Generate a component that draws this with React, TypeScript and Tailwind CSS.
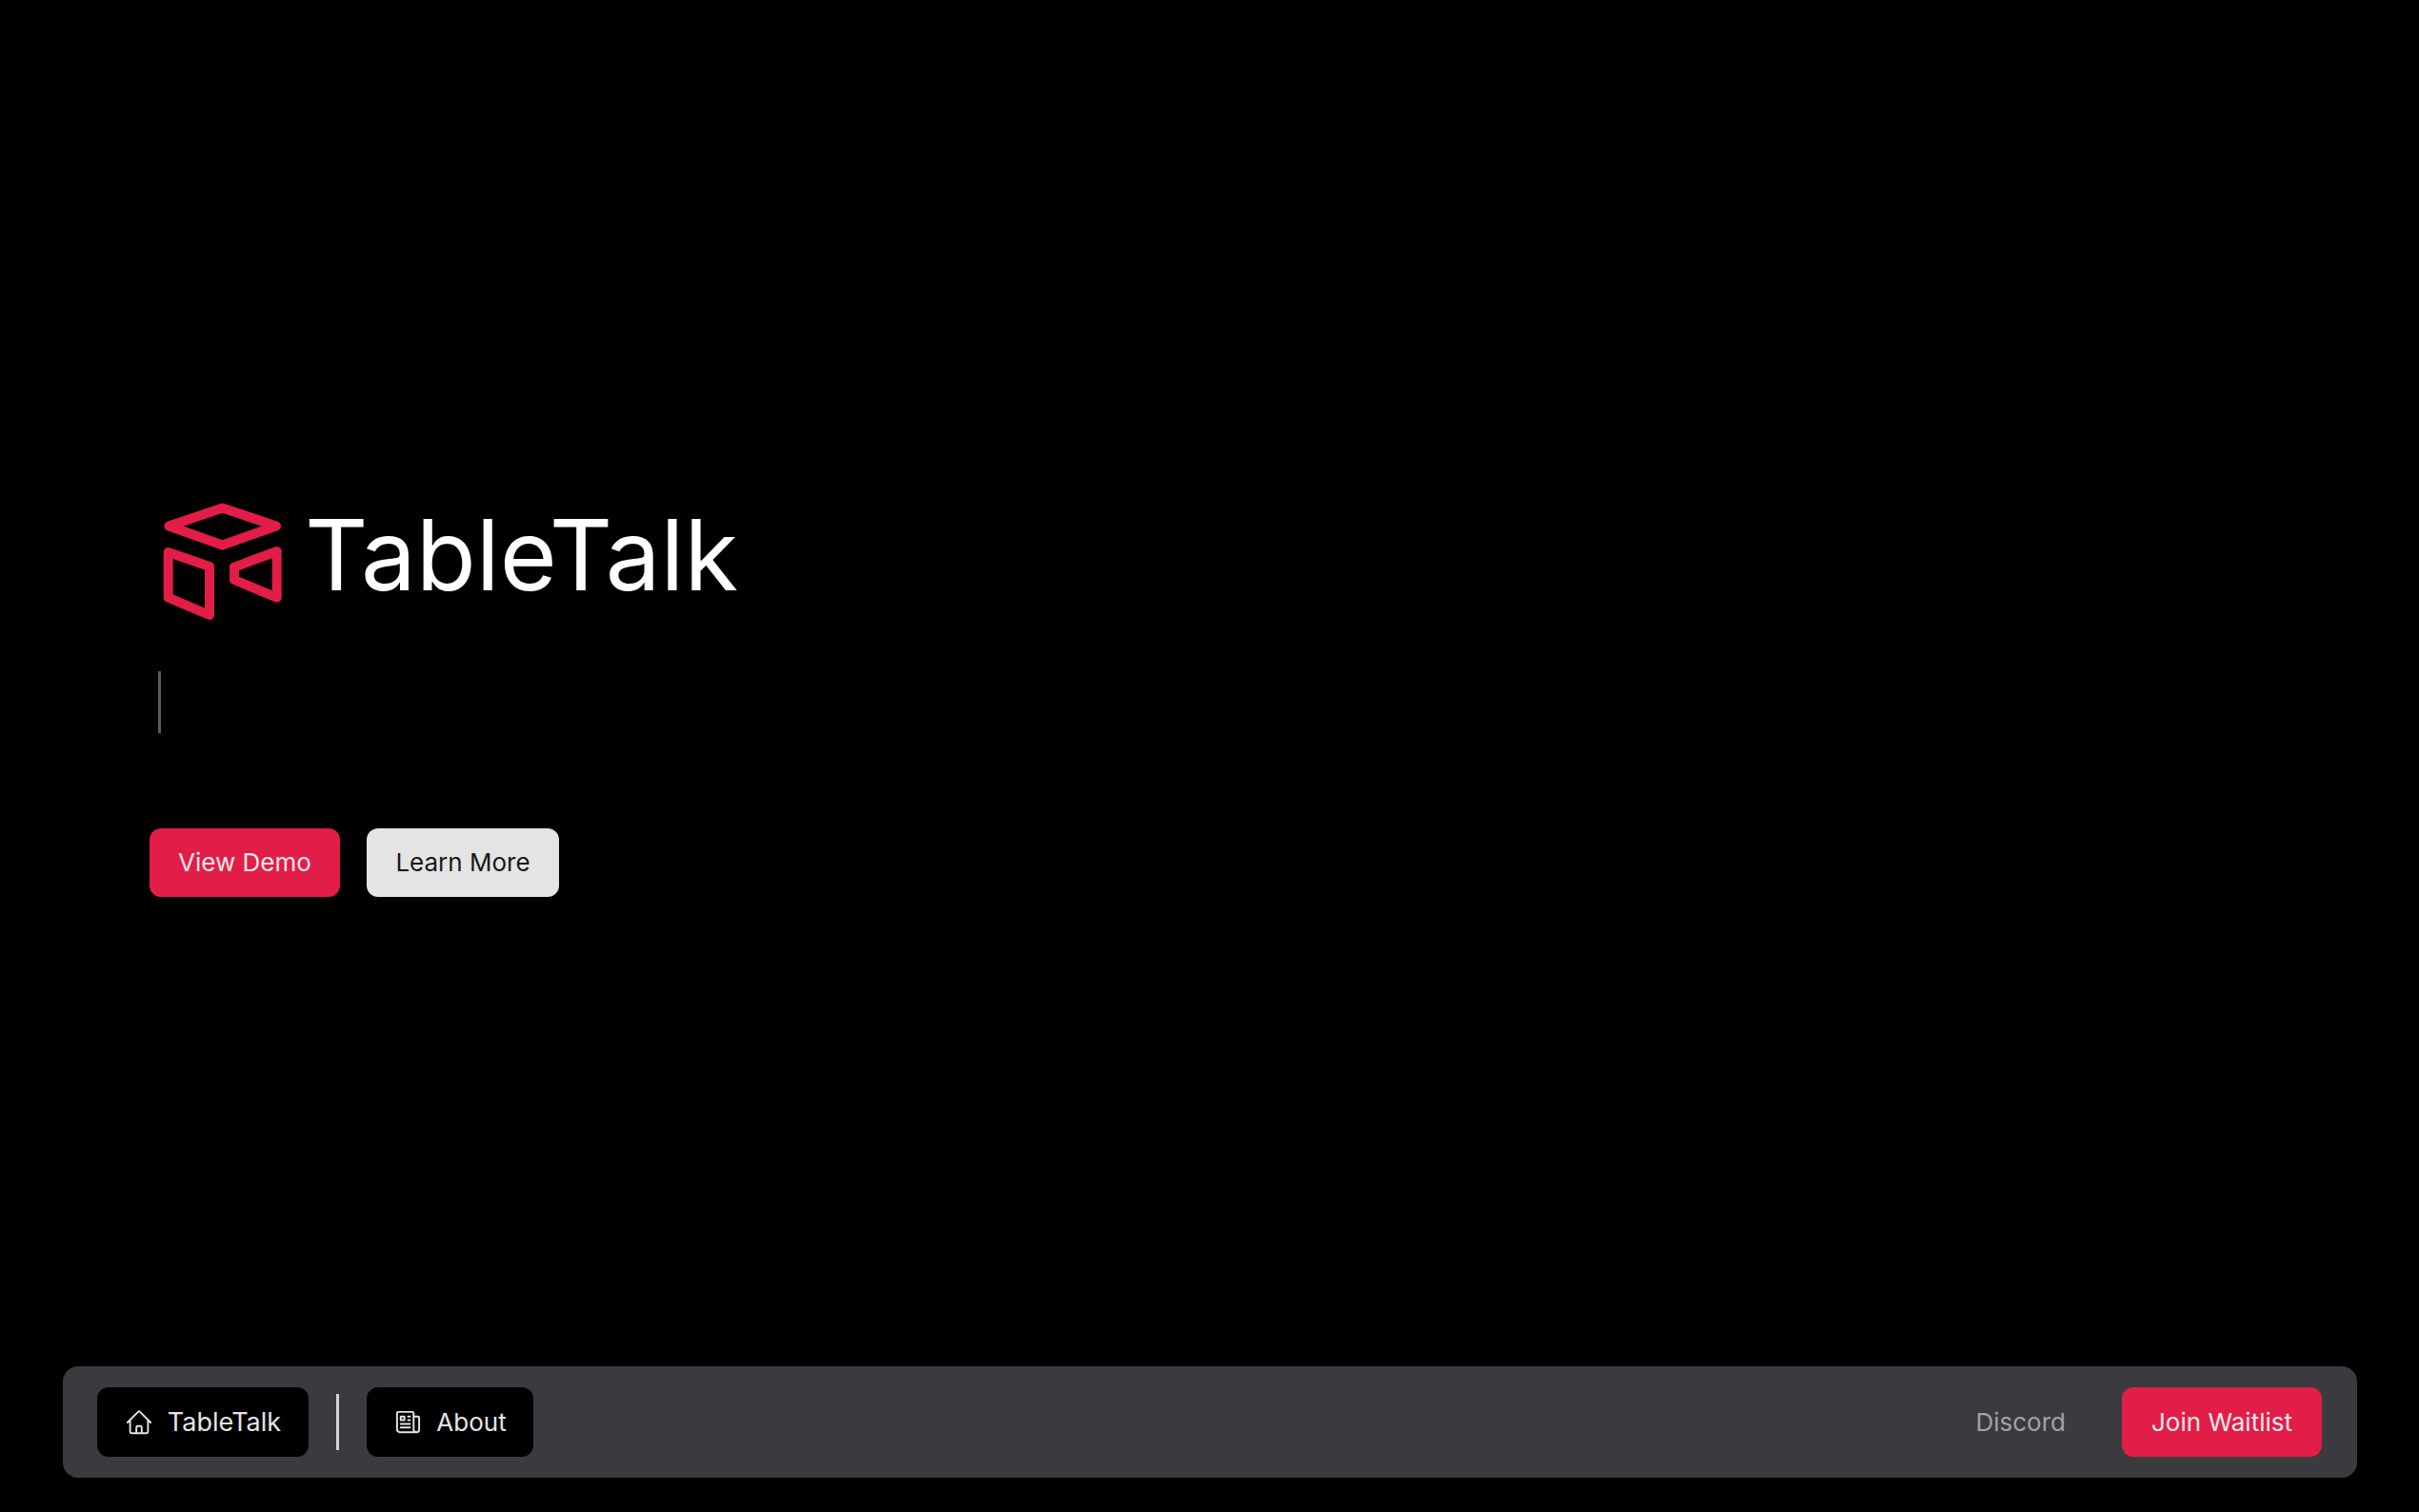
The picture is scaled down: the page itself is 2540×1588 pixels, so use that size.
import { HiOutlineHome, HiOutlineNewspaper } from "react-icons/hi2";

const Logo = () => (
  <svg
    viewBox="10 12 127 127"
    className="ml-[13px] h-[127px] w-[127px] shrink-0"
    fill="none"
    stroke="#e11d48"
    strokeWidth={10}
    strokeLinejoin="round"
  >
    <path d="M17.5 37.5 73.5 18.5 130 37.5 73.5 57.5Z" />
    <path d="M16.7 65 60 80 60 131 16.7 112.7Z" />
    <path d="M130.7 64 130.7 112.7 86 94 86 80.7Z" />
  </svg>
);

const App = () => {
  return (
    <div className="flex h-screen flex-col justify-between overflow-hidden bg-black font-['Inter',sans-serif] text-[26px] leading-none">
      <main className="flex flex-col pt-[527px] pl-[157px]">
        <div className="flex items-center">
          <Logo />
          <h1 className="mb-4 ml-[23px] text-[103px] leading-[111px] font-normal text-white">
            TableTalk
          </h1>
        </div>
        <div className="mt-[51px] ml-[9px] h-[65px] w-[3px] bg-[#5c5c5c]" />
        <div className="mt-[100px] flex gap-7">
          <button className="h-[72px] w-[200px] rounded-xl bg-[#e11d48] text-[#fde8ec]">
            View Demo
          </button>
          <button className="h-[72px] w-[202px] rounded-xl bg-[#e4e4e4] text-[#18181b]">
            Learn More
          </button>
        </div>
      </main>

      <nav className="mr-[65px] mb-9 ml-[66px] flex h-[117px] items-center justify-between rounded-2xl bg-[#3a3a3f] pr-[37px] pl-[36px]">
        <div className="flex items-center gap-[29px]">
          <a className="flex h-[73px] w-[222px] items-center justify-center gap-[15px] rounded-xl bg-black text-[27px] text-[#e4e4e7]">
            <HiOutlineHome className="h-[30px] w-[30px]" />
            TableTalk
          </a>
          <div className="h-[59px] w-[3px] bg-[#d4d4d8]" />
          <a className="flex h-[73px] w-[175px] items-center justify-center gap-[14px] rounded-xl bg-black text-[#e4e4e7]">
            <HiOutlineNewspaper className="h-[31px] w-[31px]" />
            About
          </a>
        </div>
        <div className="flex items-center gap-[59px]">
          <a className="text-[#a1a1aa]">Discord</a>
          <button className="h-[73px] w-[210px] rounded-xl bg-[#e11d48] text-[#fde8ec]">
            Join Waitlist
          </button>
        </div>
      </nav>
    </div>
  );
};

export default App;
